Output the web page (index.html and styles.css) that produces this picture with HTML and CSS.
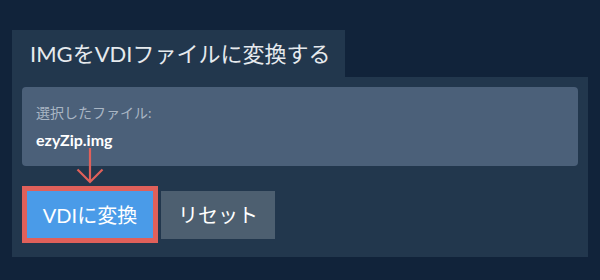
FILE: index.html
```html
<!DOCTYPE html>
<html lang="ja">

<head>
    <meta charset="UTF-8">
    <meta name="viewport" content="width=device-width, initial-scale=1.0">
    <title>IMGをVDIファイルに変換する</title>
    <link rel="stylesheet" href="styles.css">
</head>

<body>
    <div class="page">
        <div class="tab">IMGをVDIファイルに変換する</div>

        <div class="panel">
            <div class="file-box">
                <div class="file-label">選択したファイル:</div>
                <div class="file-name">ezyZip.img</div>
            </div>

            <div class="actions">
                <!-- 注目の矢印 -->
                <svg class="pointer" width="28" height="36" viewBox="0 0 28 36">
                    <path d="M14 0 V34 M1.5 21.5 L14 34 L26.5 21.5" fill="none" stroke="#e0605a" stroke-width="2.2"/>
                </svg>
                <span class="highlight">
                    <button class="btn-primary">VDIに変換</button>
                </span>
                <button class="btn-secondary">リセット</button>
            </div>
        </div>
    </div>
</body>

</html>
```

FILE: styles.css
```css
* {
    box-sizing: border-box;
    margin: 0;
    padding: 0;
}

body {
    font-family: Lato, "Noto Sans CJK JP", sans-serif;
    background: #11233a;
    width: 600px;
    height: 280px;
    overflow: hidden;
}

.page {
    padding: 30px 12px 0;
}

.tab {
    display: inline-block;
    width: 333px;
    height: 47px;
    padding-left: 18px;
    line-height: 47px;
    background: #22374d;
    color: #e6eaee;
    font-size: 22px;
}

.panel {
    background: #22374d;
    padding: 10px 10px 14px;
}

.file-box {
    background: #4b6079;
    border-radius: 4px;
    height: 79px;
    padding: 16px 14px 0;
}

.file-label {
    color: #a9b6c4;
    font-size: 14px;
    line-height: 20px;
}

.file-name {
    margin-top: 7px;
    color: #fff;
    font-size: 16px;
    font-weight: 700;
    line-height: 20px;
}

.actions {
    position: relative;
    display: flex;
    align-items: center;
    margin-top: 20px;
}

.pointer {
    position: absolute;
    left: 54px;
    top: -38px;
}

.highlight {
    display: inline-flex;
    border: 5px solid #e0605a;
    margin-right: 3px;
}

button {
    height: 47px;
    border: none;
    color: #fff;
    font-family: Lato, "Noto Sans CJK JP", sans-serif;
    font-size: 20px;
    cursor: pointer;
}

.btn-primary {
    width: 126px;
    background: #4a9be8;
}

.btn-secondary {
    width: 114px;
    height: 48px;
    background: #4d5f70;
}
```
